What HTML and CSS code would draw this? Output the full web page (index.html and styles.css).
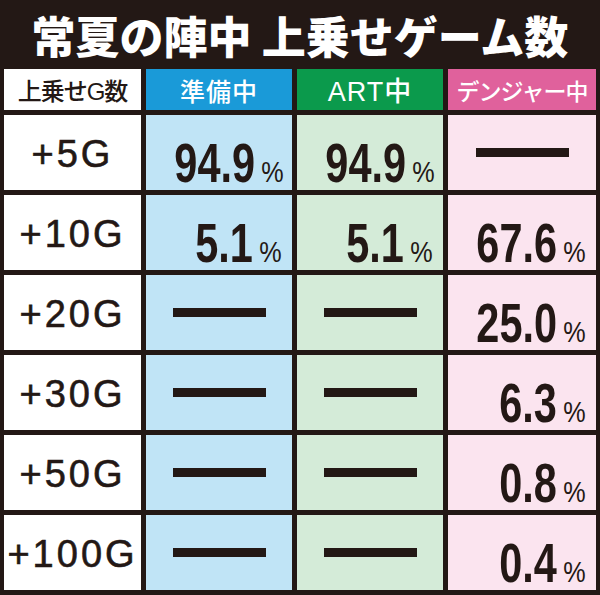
FILE: index.html
```html
<!DOCTYPE html>
<html lang="ja">
<head>
  <meta charset="UTF-8" />
  <meta name="viewport" content="width=device-width, initial-scale=1.0"/>
  <title>常夏の陣中 上乗せゲーム数</title>
  <link rel="stylesheet" href="styles.css">
</head>
<body>

  <h1 class="title">常夏の陣中 上乗せゲーム数</h1>

  <div class="table">
    <div class="head head-label">上乗せG数</div>
    <div class="head head-prep">準備中</div>
    <div class="head head-art">ART中</div>
    <div class="head head-danger">デンジャー中</div>

    <div class="label">+5G</div>
    <div class="cell prep"><span class="num">94.9</span><span class="pct">%</span></div>
    <div class="cell art"><span class="num">94.9</span><span class="pct">%</span></div>
    <div class="cell danger empty"><span class="dash"></span></div>

    <div class="label">+10G</div>
    <div class="cell prep"><span class="num">5.1</span><span class="pct">%</span></div>
    <div class="cell art"><span class="num">5.1</span><span class="pct">%</span></div>
    <div class="cell danger"><span class="num">67.6</span><span class="pct">%</span></div>

    <div class="label">+20G</div>
    <div class="cell prep empty"><span class="dash"></span></div>
    <div class="cell art empty"><span class="dash"></span></div>
    <div class="cell danger"><span class="num">25.0</span><span class="pct">%</span></div>

    <div class="label">+30G</div>
    <div class="cell prep empty"><span class="dash"></span></div>
    <div class="cell art empty"><span class="dash"></span></div>
    <div class="cell danger"><span class="num">6.3</span><span class="pct">%</span></div>

    <div class="label">+50G</div>
    <div class="cell prep empty"><span class="dash"></span></div>
    <div class="cell art empty"><span class="dash"></span></div>
    <div class="cell danger"><span class="num">0.8</span><span class="pct">%</span></div>

    <div class="label">+100G</div>
    <div class="cell prep empty"><span class="dash"></span></div>
    <div class="cell art empty"><span class="dash"></span></div>
    <div class="cell danger"><span class="num">0.4</span><span class="pct">%</span></div>
  </div>

</body>
</html>
```

FILE: styles.css
```css
body {
  margin: 0;
  width: 600px;
  height: 595px;
  overflow: hidden;
  background: #231815;
  color: #231815;
  font-family: "Noto Sans CJK JP", "Noto Sans", sans-serif;
}

.title {
  margin: 0;
  height: 69px;
  line-height: 70px;
  text-align: center;
  color: #fff;
  font-size: 44px;
  font-weight: 900;
}

.table {
  display: grid;
  grid-template-columns: 137px 146px 146px 148px;
  grid-template-rows: 41px repeat(6, 75px);
  gap: 5px;
  padding: 0 4px;
}

.head {
  display: flex;
  align-items: center;
  justify-content: center;
  font-family: "Liberation Sans", "Noto Sans CJK JP", sans-serif;
  font-size: 25px;
  font-weight: 500;
  color: #fff;
}

.head-label {
  background: #fff;
  color: #231815;
  font-size: 24px;
  letter-spacing: -1px;
}

.head-prep {
  background: #1a9ad8;
  letter-spacing: 1px;
}

.head-art {
  background: #0b9a4c;
  font-size: 27px;
  letter-spacing: 1px;
}

.head-danger {
  background: #e0619c;
  font-size: 23px;
  letter-spacing: -1px;
}

.label {
  background: #fff;
  display: flex;
  align-items: center;
  justify-content: center;
  padding-top: 3px;
  font-family: "Liberation Sans", Arial, sans-serif;
  font-size: 38px;
  letter-spacing: 3px;
  -webkit-text-stroke: 0.6px #231815;
}

.cell {
  box-sizing: border-box;
  padding: 20px 10px 0 0;
  text-align: right;
  font-family: "Liberation Sans", Arial, sans-serif;
  font-size: 56px;
  line-height: 56px;
  white-space: nowrap;
}

.prep {
  background: #c0e4f6;
}

.art {
  background: #d4ebd8;
}

.danger {
  background: #fbe4ef;
}

.num {
  display: inline-block;
  font-weight: 700;
  transform: scaleX(0.74);
  transform-origin: right;
}

.pct {
  display: inline-block;
  margin-left: 2px;
  font-size: 30px;
  line-height: 1;
  transform: scaleX(0.84);
  transform-origin: right;
}

.cell.empty {
  display: flex;
  align-items: center;
  justify-content: center;
  padding: 0;
}

.dash {
  width: 93px;
  height: 9px;
  background: #231815;
}
```
